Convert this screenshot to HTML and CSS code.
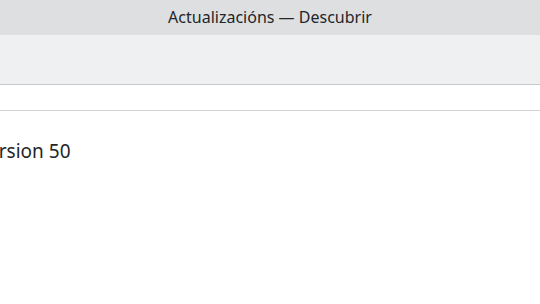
FILE: index.html
```html
<!DOCTYPE html>
<html lang="gl">
<head>
    <meta charset="UTF-8">
    <title>Actualizacións — Descubrir</title>
    <link rel="stylesheet" href="styles.css">
</head>
<body>
    <div class="titlebar">Actualizacións — Descubrir</div>
    <div class="toolbar"></div>
    <div class="header-row"></div>
    <div class="content">
        <p class="version">Version 50</p>
    </div>
</body>
</html>
```

FILE: styles.css
```css
body {
    margin: 0;
    padding: 0;
    background: #fff;
    font-family: "Noto Sans", "Open Sans", sans-serif;
    color: #232629;
    overflow: hidden;
    width: 540px;
    height: 304px;
}

.titlebar {
    height: 35px;
    background: #dedfe1;
    text-align: center;
    font-size: 16px;
    line-height: 35px;
    color: #232629;
}

.toolbar {
    height: 49px;
    background: #eff0f1;
    border-bottom: 1px solid #c8c9cb;
}

.header-row {
    height: 25px;
    border-bottom: 1px solid #d0d1d3;
}

.content {
    padding-top: 28px;
}

.version {
    margin: 0 0 0 -23px;
    font-size: 19px;
    line-height: 24px;
    white-space: nowrap;
}
```
